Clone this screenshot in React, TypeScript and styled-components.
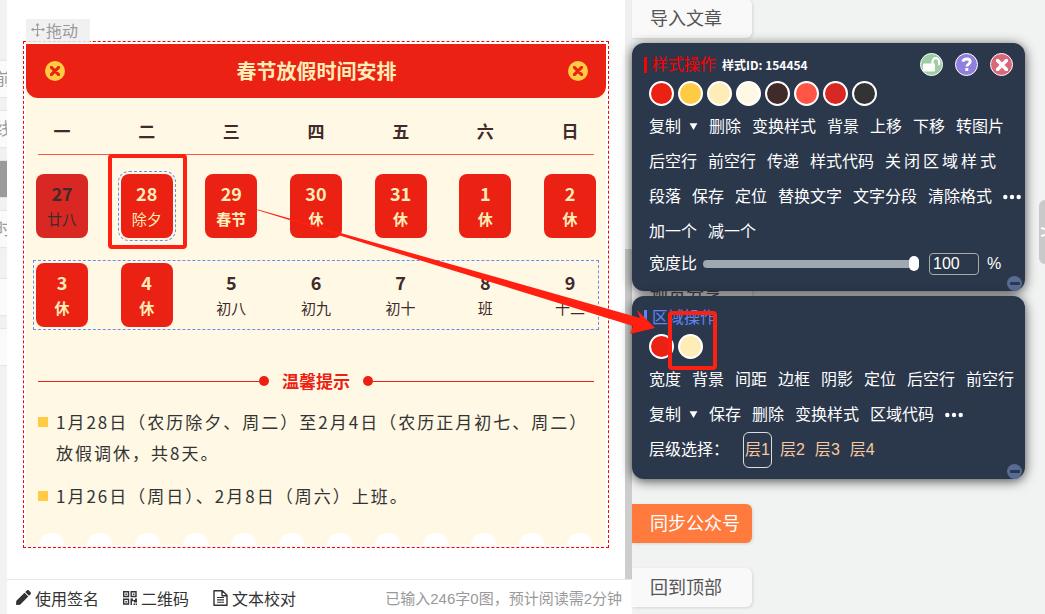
import React, { useState } from 'react';
import styled, { createGlobalStyle, css } from 'styled-components';
import { FaPen } from 'react-icons/fa';

const sans = `"Liberation Sans", "Noto Sans CJK SC", sans-serif`;
const cjk = `"Noto Sans CJK SC", sans-serif`;

const GlobalStyle = createGlobalStyle`
  * { box-sizing: border-box; }
  body { margin: 0; background: #f1f3f3; font-family: ${sans}; overflow: hidden; }
  button, input { font: inherit; color: inherit; margin: 0; padding: 0; border: 0; background: none; }
  button { cursor: pointer; white-space: nowrap; }
  h1, h2, p, ul { margin: 0; padding: 0; font-size: inherit; }
`;

const Page = styled.div`
  position: relative;
  display: grid;
  grid-template-columns: 7px minmax(0, 1fr) 413px;
  height: 100vh;
  min-height: 614px;
`;

/* ---------- left rail ---------- */
const Rail = styled.nav`
  display: flex;
  flex-direction: column;
  padding-top: 61px;
  gap: 14px;
  overflow: hidden;
`;
const RailItem = styled.button<{ $active?: boolean; $push?: boolean }>`
  display: flex;
  align-items: center;
  justify-content: center;
  height: 36px;
  width: 7px;
  flex: none;
  margin-top: ${p => (p.$push ? 18 : 0)}px;
  padding-bottom: 4px;
  overflow: hidden;
  font-size: 17px;
  color: #999;
  background: ${p => (p.$active ? '#9a9a9a' : '#fafafa')};
  box-shadow: 0 0 2px rgba(0, 0, 0, 0.2);
`;

/* ---------- editor ---------- */
const Editor = styled.main`
  display: flex;
  flex-direction: column;
  min-width: 0;
  background: #fff;
`;
const Scroller = styled.div`
  display: flex;
  flex: 1;
`;
const Canvas = styled.div`
  flex: 1;
  min-width: 0;
  padding: 41px 16px 0;
`;
const ScrollTrack = styled.div`
  display: flex;
  flex-direction: column;
  justify-content: flex-end;
  width: 7px;
  background: #f0f0f0;
`;
const ScrollThumb = styled.div`
  height: 330px;
  background: #cdcdcd;
`;
const Frame = styled.div`
  position: relative;
  padding: 2px;
  border: 1px dashed #f00;
`;
const DragTab = styled.button`
  position: absolute;
  left: 2px;
  top: -23px;
  display: flex;
  align-items: center;
  width: 64px;
  height: 24px;
  padding: 0 0 2px 4px;
  font-size: 16px;
  color: #999;
  background: rgba(238, 238, 238, 0.85);
`;
const Card = styled.article`
  background: #fff8e5;
  color: #412b2a;
  font-family: ${cjk};
`;
const CardHead = styled.header`
  display: flex;
  align-items: center;
  justify-content: space-between;
  height: 54px;
  padding: 0 18px 0 19px;
  border-radius: 0 0 12px 12px;
  background: #eb2213;
`;
const CardTitle = styled.h1`
  font-size: 20px;
  line-height: 30px;
  color: #ffedb8;
`;
const HeadBadge = styled.span`
  display: flex;
  align-items: center;
  justify-content: center;
  width: 20px;
  height: 20px;
  border-radius: 50%;
  background: #ffcb42;
  color: #eb2213;
`;
const Weekdays = styled.div`
  display: flex;
  justify-content: space-between;
  height: 57px;
  margin: 0 12px;
  padding-top: 20px;
  border-bottom: 1px solid #ff5546;
`;
const Weekday = styled.span`
  width: 48px;
  text-align: center;
  font-size: 17px;
  line-height: 26px;
  font-weight: 700;
`;
const Week = styled.div<{ $selected?: boolean }>`
  display: flex;
  justify-content: space-between;
  margin: ${p => (p.$selected ? 25 : 19)}px 10px 0;
  ${p => p.$selected && css`outline: 1px dashed #6a8bf0; outline-offset: 2px;`}
`;
type Tone = 'rest' | 'past' | 'plain';
const Day = styled.div<{ $tone: Tone; $selected?: boolean }>`
  display: flex;
  flex-direction: column;
  align-items: center;
  width: 52px;
  height: 64px;
  padding-top: 6px;
  border-radius: 8px;
  color: ${p => (p.$tone === 'rest' ? '#ffedb8' : '#412b2a')};
  background: ${p => ({ rest: '#eb2213', past: '#d92823', plain: 'transparent' })[p.$tone]};
  ${p => p.$selected && css`outline: 1px dashed #6a8bf0; outline-offset: 2px;`}
`;
const DayNumber = styled.b`
  font-size: 18px;
  line-height: 26px;
`;
const DayNote = styled.span<{ $bold?: boolean }>`
  font-size: 15px;
  line-height: 26px;
  font-weight: ${p => (p.$bold ? 700 : 400)};
`;
const TipsHead = styled.div`
  display: flex;
  align-items: center;
  margin: 41px 12px 0;
  color: #eb2213;
`;
const TipsRule = styled.span`
  flex: 1;
  height: 1px;
  background: currentColor;
`;
const TipsDot = styled.span`
  width: 10px;
  height: 10px;
  border-radius: 50%;
  background: currentColor;
`;
const TipsTitle = styled.h2`
  margin: 0 13px;
  font-size: 17px;
  line-height: 26px;
`;
const Tips = styled.ul`
  display: flex;
  flex-direction: column;
  gap: 12px;
  margin: 12px 12px 0;
  list-style: none;
`;
const Tip = styled.li`
  display: flex;
  gap: 8px;
  color: #333;
  font-size: 17px;
  line-height: 31px;
  letter-spacing: 2px;
  &::before {
    content: '';
    flex: none;
    width: 10px;
    height: 10px;
    margin-top: 11px;
    background: #ffcb42;
  }
`;
const Scallops = styled.div`
  display: flex;
  justify-content: space-between;
  margin-top: 22px;
  padding: 0 14px 0 13px;
`;
const Scallop = styled.span`
  width: 25px;
  height: 12px;
  border-radius: 12px 12px 0 0;
  background: #fff;
`;
const Footer = styled.footer`
  display: flex;
  align-items: center;
  height: 35px;
  padding: 1px 10px 0 9px;
  gap: 24px;
  border-top: 1px solid #e8e8e8;
  font-size: 16px;
  color: #333;
`;
const FooterButton = styled.button`
  display: flex;
  align-items: center;
  gap: 4px;
`;
const FooterCount = styled.span`
  margin-left: auto;
  font-size: 15px;
  color: #999;
  white-space: nowrap;
`;

/* ---------- right side ---------- */
const Side = styled.aside`
  position: relative;
  display: flex;
  flex-direction: column;
  align-items: flex-start;
`;
const SideButton = styled.button<{ $primary?: boolean; $space?: number }>`
  width: 120px;
  height: 39px;
  flex: none;
  margin-top: ${p => p.$space ?? 0}px;
  padding: 0 0 4px 18px;
  text-align: left;
  font-size: 18px;
  border-radius: 0 6px 6px 0;
  color: ${p => (p.$primary ? '#fff' : '#555')};
  background: ${p => (p.$primary ? '#ff7a3d' : '#f9f9f9')};
  box-shadow: 1px 1px 3px rgba(0, 0, 0, 0.12);
`;
const Drawer = styled.button`
  position: absolute;
  right: 0;
  top: 200px;
  display: flex;
  align-items: center;
  justify-content: flex-end;
  width: 6px;
  height: 64px;
  border-radius: 6px 0 0 6px;
  color: #fff;
  background: #c9c9c9;
`;
const Panels = styled.div`
  position: absolute;
  left: 0;
  right: 20px;
  top: 43px;
  display: flex;
  flex-direction: column;
  gap: 5px;
`;
const Panel = styled.section`
  position: relative;
  padding: 10px 0 12px;
  border-radius: 12px;
  background: #2b374b;
  color: #fff;
  font-size: 16px;
  line-height: 24px;
  box-shadow: 0 2px 12px rgba(0, 0, 0, 0.7);
`;
const PanelHead = styled.header`
  display: flex;
  align-items: center;
  height: 23px;
  padding: 0 12px;
`;
const PanelTitle = styled.h2<{ $color: string }>`
  display: flex;
  align-items: center;
  gap: 5px;
  font-weight: 400;
  line-height: 20px;
  color: ${p => p.$color};
  &::before {
    content: '';
    width: 3px;
    height: 16px;
    background: currentColor;
  }
`;
const StyleId = styled.b`
  margin-left: 6px;
  font-family: ${cjk};
  font-size: 12px;
  line-height: 22px;
`;
const RoundActions = styled.div`
  display: flex;
  gap: 12px;
  margin-left: auto;
`;
const RoundButton = styled.button<{ $color: string }>`
  display: flex;
  align-items: center;
  justify-content: center;
  width: 23px;
  height: 23px;
  border: 1px solid #fff;
  border-radius: 50%;
  background: ${p => p.$color};
`;
const Swatches = styled.div`
  display: flex;
  gap: 4px;
  margin: 5px 17px 3px;
`;
const Swatch = styled.button<{ $color: string }>`
  width: 25px;
  height: 25px;
  border: 2px solid #fff;
  border-radius: 50%;
  background: ${p => p.$color};
`;
const Actions = styled.div`
  display: flex;
  align-items: center;
  gap: 11px;
  height: 35px;
  padding-left: 17px;
`;
const Action = styled.button<{ $wide?: boolean }>`
  display: flex;
  align-items: center;
  gap: 8px;
  letter-spacing: ${p => (p.$wide ? '3px' : 'normal')};
`;
const WidthRow = styled.div`
  display: flex;
  align-items: center;
  height: 30px;
  padding-left: 17px;
`;
const Range = styled.input`
  appearance: none;
  width: 216px;
  height: 15px;
  margin: 0 10px 0 6px;
  &::-webkit-slider-runnable-track {
    height: 8px;
    border-radius: 4px;
    background: #9fa7b3;
  }
  &::-webkit-slider-thumb {
    appearance: none;
    width: 10px;
    height: 15px;
    margin-top: -4px;
    border-radius: 5px;
    background: #fff;
  }
`;
const WidthInput = styled.input`
  width: 50px;
  height: 22px;
  padding: 0 3px;
  margin-right: 8px;
  border: 1px solid #aaa;
  border-radius: 4px;
`;
const LayerList = styled.div`
  display: flex;
  gap: 6px;
  margin-left: 3px;
`;
const Layer = styled.button<{ $on?: boolean }>`
  height: 36px;
  padding: 0 1px;
  border: 1px solid ${p => (p.$on ? '#ddd' : 'transparent')};
  border-radius: 6px;
  color: #f6c9a0;
`;
const Collapse = styled.button`
  position: absolute;
  right: 3px;
  bottom: 0;
  display: flex;
  align-items: center;
  justify-content: center;
  width: 15px;
  height: 15px;
  border-radius: 50%;
  background: #576b93;
  &::before {
    content: '';
    width: 10px;
    height: 3px;
    border-radius: 1px;
    background: #2b374b;
  }
`;

/* ---------- tutorial marks over the page ---------- */
const Marks = styled.svg`
  position: absolute;
  left: 0;
  top: 0;
  width: 1045px;
  height: 614px;
  pointer-events: none;
`;

/* ---------- icons ---------- */
const Cross = ({ size }: { size: number }) => (
  <svg width={size} height={size} viewBox="0 0 12 12" stroke="currentColor" strokeWidth="3.6" aria-hidden="true">
    <path d="M1.600 1.600l8.800 8.800M10.400 1.600l-8.800 8.800" strokeLinecap="round" />
  </svg>
);
const OpenLock = () => (
  <svg width="19" height="17" viewBox="0 0 19 17" fill="none" aria-hidden="true">
    <rect x="1" y="7.500" width="12" height="8" rx="1" fill="currentColor" />
    <path d="M10.500 8V5.500a3.300 3.300 0 0 1 6.600 0V8.500" stroke="currentColor" strokeWidth="2.2" strokeLinecap="round" />
  </svg>
);
const Question = () => (
  <svg width="13" height="15" viewBox="0 0 13 15" fill="none" aria-hidden="true">
    <path d="M2.800 4.600C3.400 2.800 4.800 2 6.600 2c2 0 3.600 1.100 3.600 2.800 0 2.300-3.300 2.200-3.300 4.700" stroke="currentColor" strokeWidth="2.8" />
    <rect x="5.300" y="11" width="3" height="3" rx=".5" fill="currentColor" />
  </svg>
);
const QrIcon = () => (
  <svg width="14" height="14" viewBox="0 0 14 14" fill="none" stroke="currentColor" aria-hidden="true">
    <path d="M.7.700h4.800v4.800H.7zM8.200.700H13v4.800H8.200zM.7 8.200h4.800V13H.7z" strokeWidth="1.4" />
    <path d="M2.400 2.400h1.500v1.500H2.400zM9.900 2.400h1.500v1.500H9.900zM2.400 9.900h1.500v1.500H2.400zM7.500 7.500H10v1.400h2V7.500h2v4h-3v-1.200H9V14H7.500zM10.500 12.600H12V14h-1.500zM12.600 12.600H14V14h-1.400z" fill="currentColor" stroke="none" />
  </svg>
);
const FileIcon = () => (
  <svg width="15" height="16" viewBox="0 0 15 16" fill="none" stroke="currentColor" aria-hidden="true">
    <path d="M1 .800h8.300L14 5.300v9.900H1zM9 1v4.700h4.800" strokeWidth="1.4" strokeLinejoin="round" />
    <path d="M4 7.500h7M4 9.900h7M4 12.300h7" strokeWidth="1.100" />
  </svg>
);
const Caret = () => (
  <svg width="9" height="9" viewBox="0 0 8 8" aria-hidden="true">
    <path d="M.5 1h7L4 7z" fill="currentColor" />
  </svg>
);
const Dots = () => (
  <svg width="18" height="6" viewBox="0 0 18 6" aria-hidden="true">
    <circle cx="2.300" cy="3" r="2.200" fill="currentColor" />
    <circle cx="9" cy="3" r="2.200" fill="currentColor" />
    <circle cx="15.700" cy="3" r="2.200" fill="currentColor" />
  </svg>
);
const MoveIcon = () => (
  <svg width="16" height="16" viewBox="0 0 16 16" fill="none" stroke="currentColor" aria-hidden="true">
    <path d="M7.500 2v12M2 7.500h12" />
    <path d="M5.500 3.500L7.500 1l2 2.500zM5.500 12.500l2 2.500 2-2.500zM3.500 5.500L1 7.500l2.500 2zM12.500 5.500l2.500 2-2.500 2z" fill="currentColor" stroke="none" />
  </svg>
);
const DrawerDots = () => (
  <svg width="4" height="12" viewBox="0 0 4 12" fill="currentColor" aria-hidden="true">
    <path d="M0 1l4 1v2L0 3zM0 9l4-1v2l-4 1z" />
  </svg>
);

type DayData = { n: number; note: string; tone: Tone; bold?: boolean; selected?: boolean };
const week1: DayData[] = [
  { n: 27, note: '廿八', tone: 'past' },
  { n: 28, note: '除夕', tone: 'rest', selected: true },
  { n: 29, note: '春节', tone: 'rest', bold: true },
  { n: 30, note: '休', tone: 'rest', bold: true },
  { n: 31, note: '休', tone: 'rest', bold: true },
  { n: 1, note: '休', tone: 'rest', bold: true },
  { n: 2, note: '休', tone: 'rest', bold: true },
];
const week2: DayData[] = [
  { n: 3, note: '休', tone: 'rest', bold: true },
  { n: 4, note: '休', tone: 'rest', bold: true },
  { n: 5, note: '初八', tone: 'plain' },
  { n: 6, note: '初九', tone: 'plain' },
  { n: 7, note: '初十', tone: 'plain' },
  { n: 8, note: '班', tone: 'plain' },
  { n: 9, note: '十二', tone: 'plain' },
];
const palette = ['#eb2213', '#ffcb42', '#ffedb8', '#fff8e5', '#412b2a', '#ff5546', '#d92823', '#333333'];

const WeekRow = ({ days, selected }: { days: DayData[]; selected?: boolean }) => (
  <Week $selected={selected}>
    {days.map(d => (
      <Day key={d.n} $tone={d.tone} $selected={d.selected}>
        <DayNumber>{d.n}</DayNumber>
        <DayNote $bold={d.bold}>{d.note}</DayNote>
      </Day>
    ))}
  </Week>
);
const ActionRow = ({ items, more }: { items: string[]; more?: boolean }) => (
  <Actions>
    {items.map(t => (
      <Action key={t} $wide={t === '关闭区域样式'}>
        {t}
        {t === '复制' && <Caret />}
      </Action>
    ))}
    {more && <Action aria-label="更多"><Dots /></Action>}
  </Actions>
);

export default function App() {
  const [width, setWidth] = useState('100');
  const [layer, setLayer] = useState(1);
  return (
    <Page>
      <GlobalStyle />
      <Rail>
        <RailItem>前</RailItem>
        <RailItem>线</RailItem>
        <RailItem $active aria-label="当前" />
        <RailItem>时</RailItem>
        <RailItem $push aria-label="分组一" />
        <RailItem aria-label="分组二" />
      </Rail>

      <Editor>
        <Scroller>
          <Canvas>
            <Frame>
              <Card>
                <CardHead>
                  <HeadBadge><Cross size={10} /></HeadBadge>
                  <CardTitle>春节放假时间安排</CardTitle>
                  <HeadBadge><Cross size={10} /></HeadBadge>
                </CardHead>
                <Weekdays>
                  {[...'一二三四五六日'].map(d => <Weekday key={d}>{d}</Weekday>)}
                </Weekdays>
                <WeekRow days={week1} />
                <WeekRow days={week2} selected />
                <TipsHead>
                  <TipsRule /><TipsDot />
                  <TipsTitle>温馨提示</TipsTitle>
                  <TipsDot /><TipsRule />
                </TipsHead>
                <Tips>
                  <Tip><p>1月28日（农历除夕、周二）至2月4日（农历正月初七、周二）放假调休，共8天。</p></Tip>
                  <Tip><p>1月26日（周日）、2月8日（周六）上班。</p></Tip>
                </Tips>
                <Scallops>
                  {Array.from({ length: 12 }, (_, i) => <Scallop key={i} />)}
                </Scallops>
              </Card>
              <DragTab><MoveIcon />拖动</DragTab>
            </Frame>
          </Canvas>
          <ScrollTrack><ScrollThumb /></ScrollTrack>
        </Scroller>
        <Footer>
          <FooterButton><FaPen size={15} />使用签名</FooterButton>
          <FooterButton><QrIcon />二维码</FooterButton>
          <FooterButton><FileIcon />文本校对</FooterButton>
          <FooterCount>已输入246字0图，预计阅读需2分钟</FooterCount>
        </Footer>
      </Editor>

      <Side>
        <SideButton $space={-1}>导入文章</SideButton>
        <SideButton $space={236}>预览分享</SideButton>
        <SideButton $primary $space={191}>同步公众号</SideButton>
        <SideButton $space={25}>回到顶部</SideButton>
        <Drawer aria-label="展开"><DrawerDots /></Drawer>
        <Panels>
          <Panel>
            <PanelHead>
              <PanelTitle $color="#f00">样式操作</PanelTitle>
              <StyleId>样式ID: 154454</StyleId>
              <RoundActions>
                <RoundButton $color="#9ccda5" aria-label="解锁"><OpenLock /></RoundButton>
                <RoundButton $color="#8f80dd" aria-label="帮助"><Question /></RoundButton>
                <RoundButton $color="#d8687a" aria-label="关闭"><Cross size={12} /></RoundButton>
              </RoundActions>
            </PanelHead>
            <Swatches>
              {palette.map(c => <Swatch key={c} $color={c} aria-label={c} />)}
            </Swatches>
            <ActionRow items={['复制', '删除', '变换样式', '背景', '上移', '下移', '转图片']} />
            <ActionRow items={['后空行', '前空行', '传递', '样式代码', '关闭区域样式']} />
            <ActionRow items={['段落', '保存', '定位', '替换文字', '文字分段', '清除格式']} more />
            <ActionRow items={['加一个', '减一个']} />
            <WidthRow>
              <label htmlFor="ratio">宽度比</label>
              <Range id="ratio" type="range" min="0" max="100" value={width} onChange={e => setWidth(e.target.value)} />
              <WidthInput aria-label="宽度比数值" value={width} onChange={e => setWidth(e.target.value)} />
              %
            </WidthRow>
            <Collapse aria-label="收起" />
          </Panel>
          <Panel>
            <PanelHead>
              <PanelTitle $color="#5f84f5">区域操作</PanelTitle>
            </PanelHead>
            <Swatches>
              <Swatch $color="#eb2213" aria-label="#eb2213" />
              <Swatch $color="#ffedb8" aria-label="#ffedb8" />
            </Swatches>
            <ActionRow items={['宽度', '背景', '间距', '边框', '阴影', '定位', '后空行', '前空行']} />
            <ActionRow items={['复制', '保存', '删除', '变换样式', '区域代码']} more />
            <Actions>
              <span>层级选择：</span>
              <LayerList>
                {[1, 2, 3, 4].map(n => (
                  <Layer key={n} $on={n === layer} onClick={() => setLayer(n)}>层{n}</Layer>
                ))}
              </LayerList>
            </Actions>
            <Collapse aria-label="收起" />
          </Panel>
        </Panels>
      </Side>

      <Marks viewBox="0 0 1045 614" aria-hidden="true">
        <g fill="none" stroke="#ff2012" strokeWidth="4" strokeLinejoin="round">
          <rect x="110" y="156" width="75" height="91" rx="2" />
          <rect x="670" y="313" width="45" height="55" rx="2" />
        </g>
        <path d="M257 210L258 209.500L640 318L637 310L655 328L630 334L633 326Z" fill="#ff2012" />
      </Marks>
    </Page>
  );
}
